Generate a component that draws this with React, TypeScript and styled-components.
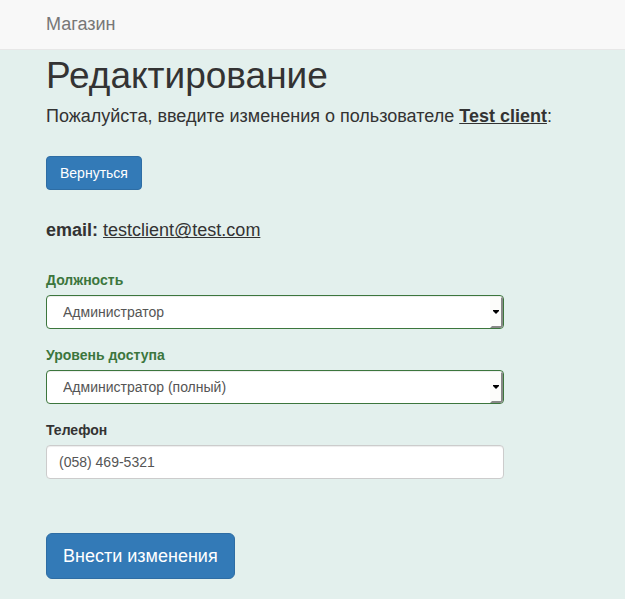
import React from "react";
import styled, { createGlobalStyle } from "styled-components";

const GlobalStyle = createGlobalStyle`
  *, *::before, *::after { box-sizing: border-box; }
  html { background: #e3f0ed; }
  body {
    margin: 0;
    color: #333;
    background: #e3f0ed;
    font: 14px/20px "Liberation Sans", Arial, sans-serif;
  }
  u { text-decoration-skip-ink: none; }
`;

const Navbar = styled.nav`
  display: flex;
  padding: 14px 46px 15px;
  background: #f8f8f8;
  border-bottom: 1px solid #e7e7e7;
`;

const Brand = styled.a`
  color: #777;
  font-size: 18px;
  line-height: 20px;
  text-decoration: none;
`;

const Content = styled.main`
  padding: 6px 46px 20px;
`;

const Title = styled.h1`
  margin: 0;
  font-size: 37px;
  line-height: 40px;
  font-weight: 400;
`;

const Lead = styled.p<{ $gap: number }>`
  margin: ${(p) => p.$gap}px 0 0;
  font-size: 18px;
  line-height: 20px;
`;

const Button = styled.button<{ $large?: boolean }>`
  display: block;
  margin-top: 30px;
  padding: ${(p) => (p.$large ? "10px 16px" : "6px 13px")};
  color: #fff;
  background: #337ab7;
  border: 1px solid #2e6da4;
  border-radius: ${(p) => (p.$large ? 6 : 4)}px;
  font-family: inherit;
  font-size: ${(p) => (p.$large ? 18 : 14)}px;
  line-height: ${(p) => (p.$large ? 24 : 20)}px;
  cursor: pointer;
`;

const Form = styled.form`
  display: flex;
  flex-direction: column;
  max-width: 458px;
  margin-top: 30px;
`;

const Field = styled.div`
  margin-bottom: 16px;
`;

const Label = styled.label<{ $success?: boolean }>`
  display: block;
  margin-bottom: 5px;
  font-weight: 700;
  color: ${(p) => (p.$success ? "#3c763d" : "#333")};
`;

const SelectFrame = styled.div`
  position: relative;
`;

const Select = styled.select`
  display: block;
  width: 100%;
  height: 34px;
  padding: 6px 16px;
  color: #555;
  background: #fff;
  border: 1px solid #3c763d;
  border-radius: 4px;
  box-shadow: inset 0 1px 1px rgba(0, 0, 0, 0.075);
  font: inherit;
  appearance: none;
`;

const Arrow = styled.svg`
  position: absolute;
  top: 1px;
  right: 1px;
  border-radius: 0 3px 3px 0;
  pointer-events: none;
`;

const Input = styled.input`
  display: block;
  width: 100%;
  height: 34px;
  padding: 6px 12px;
  color: #555;
  background: #fff;
  border: 1px solid #ccc;
  border-radius: 4px;
  box-shadow: inset 0 1px 1px rgba(0, 0, 0, 0.075);
  font: inherit;
`;

const Actions = styled.div`
  display: flex;
  margin-top: 8px;
`;

function SelectField({ id, label, value }: { id: string; label: string; value: string }) {
  return (
    <Field>
      <Label htmlFor={id} $success>{label}</Label>
      <SelectFrame>
        <Select id={id} defaultValue={value}>
          <option>{value}</option>
        </Select>
        <Arrow width="13" height="32" viewBox="0 0 13 32" aria-hidden="true">
          <path d="M0 1h11v29H0z" fill="#fcfcfa" />
          <path d="M11 2l2-2v32H0l2-2h9z" fill="#888" />
          <path d="M3 14h6v1L6 18 3 15z" fill="#000" />
        </Arrow>
      </SelectFrame>
    </Field>
  );
}

export default function App() {
  return (
    <>
      <GlobalStyle />
      <Navbar><Brand href="#">Магазин</Brand></Navbar>
      <Content>
        <Title>Редактирование</Title>
        <Lead $gap={10}>
          Пожалуйста, введите изменения о пользователе <u><b>Test client</b></u>:
        </Lead>
        <Button type="button">Вернуться</Button>
        <Lead $gap={30}><b>email:</b> <u>testclient@test.com</u></Lead>
        <Form onSubmit={(e) => e.preventDefault()}>
          <SelectField id="role" label="Должность" value="Администратор" />
          <SelectField id="access" label="Уровень доступа" value="Администратор (полный)" />
          <Field>
            <Label htmlFor="phone">Телефон</Label>
            <Input id="phone" type="tel" defaultValue="(058) 469-5321" />
          </Field>
          <Actions><Button $large type="submit">Внести изменения</Button></Actions>
        </Form>
      </Content>
    </>
  );
}
